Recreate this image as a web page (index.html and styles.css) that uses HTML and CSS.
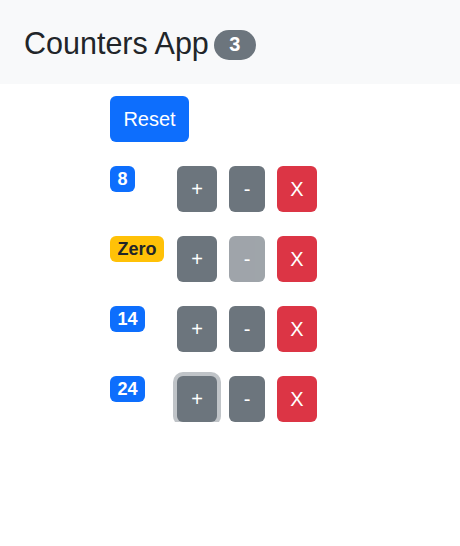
FILE: index.html
```html
<!DOCTYPE html>
<html lang="en">
<head>
<meta charset="utf-8">
<title>Counters App</title>
<link rel="stylesheet" href="styles.css">
</head>
<body>
<nav class="navbar">
  <span class="brand">Counters App</span>
  <span class="pill">3</span>
</nav>
<main class="content">
  <button class="btn btn-primary btn-reset">Reset</button>
  <div class="counter">
    <div class="count-col"><span class="badge badge-primary">8</span></div>
    <button class="btn btn-secondary btn-inc">+</button>
    <button class="btn btn-secondary btn-dec">-</button>
    <button class="btn btn-danger btn-del">X</button>
  </div>
  <div class="counter">
    <div class="count-col"><span class="badge badge-warning">Zero</span></div>
    <button class="btn btn-secondary btn-inc">+</button>
    <button class="btn btn-secondary btn-dec disabled">-</button>
    <button class="btn btn-danger btn-del">X</button>
  </div>
  <div class="counter">
    <div class="count-col"><span class="badge badge-primary">14</span></div>
    <button class="btn btn-secondary btn-inc">+</button>
    <button class="btn btn-secondary btn-dec">-</button>
    <button class="btn btn-danger btn-del">X</button>
  </div>
  <div class="counter">
    <div class="count-col"><span class="badge badge-primary">24</span></div>
    <button class="btn btn-secondary btn-inc focused">+</button>
    <button class="btn btn-secondary btn-dec">-</button>
    <button class="btn btn-danger btn-del">X</button>
  </div>
</main>
</body>
</html>
```
FILE: styles.css
```css
* { box-sizing: border-box; }
body {
  margin: 0;
  font-family: "Liberation Sans", Arial, sans-serif;
  color: #212529;
  background: #fff;
}
.navbar {
  height: 84px;
  background: #f8f9fa;
  display: flex;
  align-items: center;
  padding: 2px 0 0 24px;
  gap: 5px;
}
.brand {
  font-size: 30.5px;
  line-height: 36px;
  color: #212529;
}
.pill {
  display: inline-flex;
  align-items: center;
  justify-content: center;
  height: 30px;
  min-width: 42px;
  padding: 0 14px;
  border-radius: 15px;
  background: #6c757d;
  color: #fff;
  font-weight: 700;
  font-size: 20px;
  margin-top: 3px;
}
.content {
  padding: 12px 0 0 110px;
  display: flex;
  flex-direction: column;
  align-items: flex-start;
  gap: 24px;
}
.btn {
  border: 0;
  border-radius: 6px;
  color: #fff;
  font-family: inherit;
  font-size: 20px;
  height: 46px;
  padding: 0;
  cursor: pointer;
  line-height: 46px;
}
.btn-primary { background: #0d6efd; }
.btn-secondary { background: #6c757d; }
.btn-danger { background: #dc3545; }
.btn-reset { width: 79px; }
.btn-inc { width: 40px; }
.btn-dec { width: 36px; }
.btn-del { width: 40px; }
.disabled { opacity: 0.65; }
.focused { box-shadow: 0 0 0 4px rgba(130, 138, 145, 0.5); }
.counter {
  display: flex;
  align-items: flex-start;
  gap: 12px;
}
.count-col {
  width: 55px;
}
.badge {
  display: inline-block;
  height: 26px;
  line-height: 26px;
  padding: 0 7.5px;
  border-radius: 6px;
  font-size: 18px;
  font-weight: 700;
  color: #fff;
}
.badge-primary { background: #0d6efd; }
.badge-warning { background: #ffc107; color: #212529; }
```
